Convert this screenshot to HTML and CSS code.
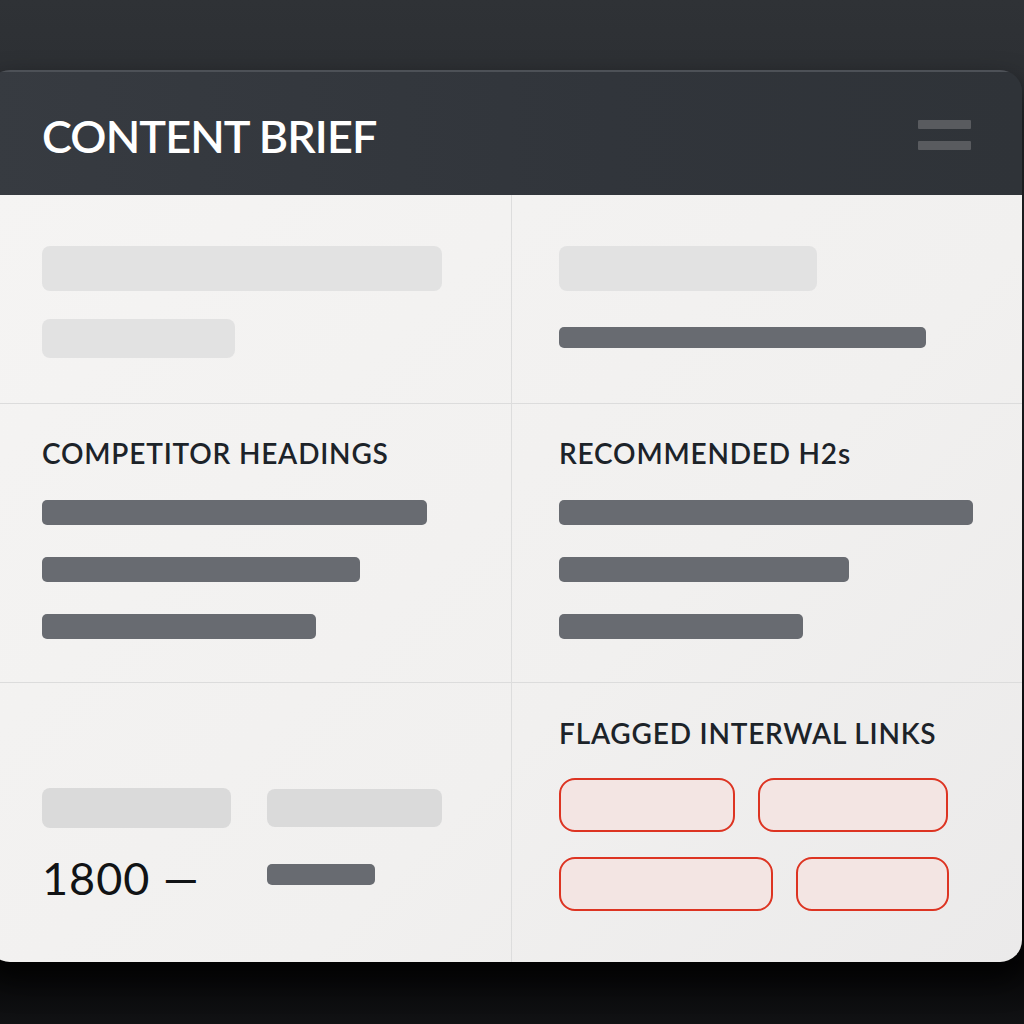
FILE: index.html
```html
<!DOCTYPE html>
<html lang="en">
<head>
<meta charset="utf-8">
<title>Content Brief</title>
<link rel="stylesheet" href="styles.css">
</head>
<body>
<div class="stage">
  <section class="brief">
    <header class="brief-head">
      <h1 class="brief-title">CONTENT BRIEF</h1>
      <div class="menu" aria-label="Menu"><span></span><span></span></div>
    </header>
    <div class="grid">
      <div class="cell cell-top">
        <div class="ph ph-lg" style="width:400px"></div>
        <div class="ph ph-md" style="width:193px"></div>
      </div>
      <div class="cell cell-top cell-right">
        <div class="ph ph-lg" style="width:258px"></div>
        <div class="bar bar-thin" style="width:367px"></div>
      </div>
      <div class="cell cell-list">
        <h2 class="label">COMPETITOR HEADINGS</h2>
        <div class="bars">
          <div class="bar" style="width:385px"></div>
          <div class="bar" style="width:318px"></div>
          <div class="bar" style="width:274px"></div>
        </div>
      </div>
      <div class="cell cell-list cell-right">
        <h2 class="label">RECOMMENDED H2s</h2>
        <div class="bars">
          <div class="bar" style="width:414px"></div>
          <div class="bar" style="width:290px"></div>
          <div class="bar" style="width:244px"></div>
        </div>
      </div>
      <div class="cell cell-stats">
        <div class="stats-row">
          <div class="ph ph-stat" style="width:189px"></div>
          <div class="ph ph-stat2" style="width:175px"></div>
        </div>
        <div class="stats-row stats-row-2">
          <div class="count">1800 —</div>
          <div class="bar bar-small" style="width:108px"></div>
        </div>
      </div>
      <div class="cell cell-links cell-right">
        <h2 class="label">FLAGGED INTERWAL LINKS</h2>
        <div class="pills">
          <div class="pill-row">
            <div class="pill" style="width:176px"></div>
            <div class="pill" style="width:190px"></div>
          </div>
          <div class="pill-row">
            <div class="pill" style="width:214px"></div>
            <div class="pill" style="width:153px"></div>
          </div>
        </div>
      </div>
    </div>
  </section>
</div>
</body>
</html>
```
FILE: styles.css
```css
* { box-sizing: border-box; }

html, body {
  margin: 0;
  height: 100%;
}

body {
  background: linear-gradient(180deg, #2f3236 0%, #2a2d31 15%, #1e2023 55%, #060607 94%, #111214 100%);
  font-family: "Lato", "Noto Sans", sans-serif;
  overflow: hidden;
}

.stage {
  height: 1024px;
  padding-top: 70px;
  overflow: hidden;
}

.brief {
  width: 1034px;
  margin-left: -12px;
  border-radius: 22px;
  overflow: hidden;
  box-shadow: 0 16px 30px rgba(0, 0, 0, 0.75);
}

/* dark title bar */
.brief-head {
  height: 125px;
  background: linear-gradient(90deg, #373b41 0%, #31353b 60%, #2f3338 100%);
  border-top: 2px solid #4d5157;
  display: flex;
  align-items: center;
  justify-content: space-between;
  padding: 0 51px 0 54px;
}

.brief-title {
  margin: 0;
  color: #ffffff;
  font-family: "Lato", sans-serif;
  font-weight: 600;
  font-size: 45px;
  letter-spacing: -0.9px;
  line-height: 1;
  padding-top: 6px;
}

.menu {
  display: flex;
  flex-direction: column;
  gap: 12px;
  padding-top: 2px;
}

.menu span {
  display: block;
  width: 53px;
  height: 9px;
  background: #595b5f;
  border-radius: 1px;
}

/* body grid */
.grid {
  display: grid;
  grid-template-columns: 523px 511px;
  grid-template-rows: 208px 279px 280px;
  background: linear-gradient(135deg, #f5f4f3 0%, #f1f0ef 60%, #ebeaea 100%);
}

.cell {
  padding-left: 54px;
  border-top: 1px solid #dcdcdc;
}

.cell-right {
  padding-left: 47px;
  border-left: 1px solid #dddddd;
}

.cell-top {
  border-top: none;
  padding-top: 51px;
}

.ph {
  background: #e2e2e2;
  border-radius: 8px;
}

.ph-lg { height: 45px; }

.ph-md {
  height: 39px;
  margin-top: 28px;
}

.cell-top .bar-thin { margin-top: 36px; }

.bar {
  height: 25px;
  background: #686b71;
  border-radius: 5px;
}

.bar-thin { height: 21px; }

.label {
  margin: 0;
  font-family: "Lato", sans-serif;
  font-weight: 600;
  font-size: 28px;
  color: #1c2329;
  letter-spacing: 0.8px;
  line-height: 1;
}

.cell-list {
  padding-top: 35px;
}

.cell-list .bars {
  margin-top: 33px;
  display: flex;
  flex-direction: column;
  gap: 32px;
}

/* word-count block */
.cell-stats {
  padding-top: 105px;
}

.stats-row {
  display: flex;
  align-items: center;
  gap: 36px;
}

.ph-stat { height: 40px; background: #dadada; }
.ph-stat2 { height: 38px; background: #dadada; }

.stats-row-2 {
  margin-top: 28px;
  gap: 67px;
  align-items: flex-start;
}

.count {
  font-family: "Lato", sans-serif;
  font-size: 45px;
  line-height: 1;
  color: #111315;
  letter-spacing: 1px;
}

.bar-small {
  height: 21px;
  margin-top: 8px;
}

/* flagged links */
.cell-links {
  padding-top: 36px;
}

.pills {
  margin-top: 31px;
  display: flex;
  flex-direction: column;
  gap: 25px;
}

.pill-row {
  display: flex;
  gap: 23px;
}

.pill {
  height: 54px;
  border: 2px solid #dd3422;
  background: #f3e5e3;
  border-radius: 16px;
}
```
